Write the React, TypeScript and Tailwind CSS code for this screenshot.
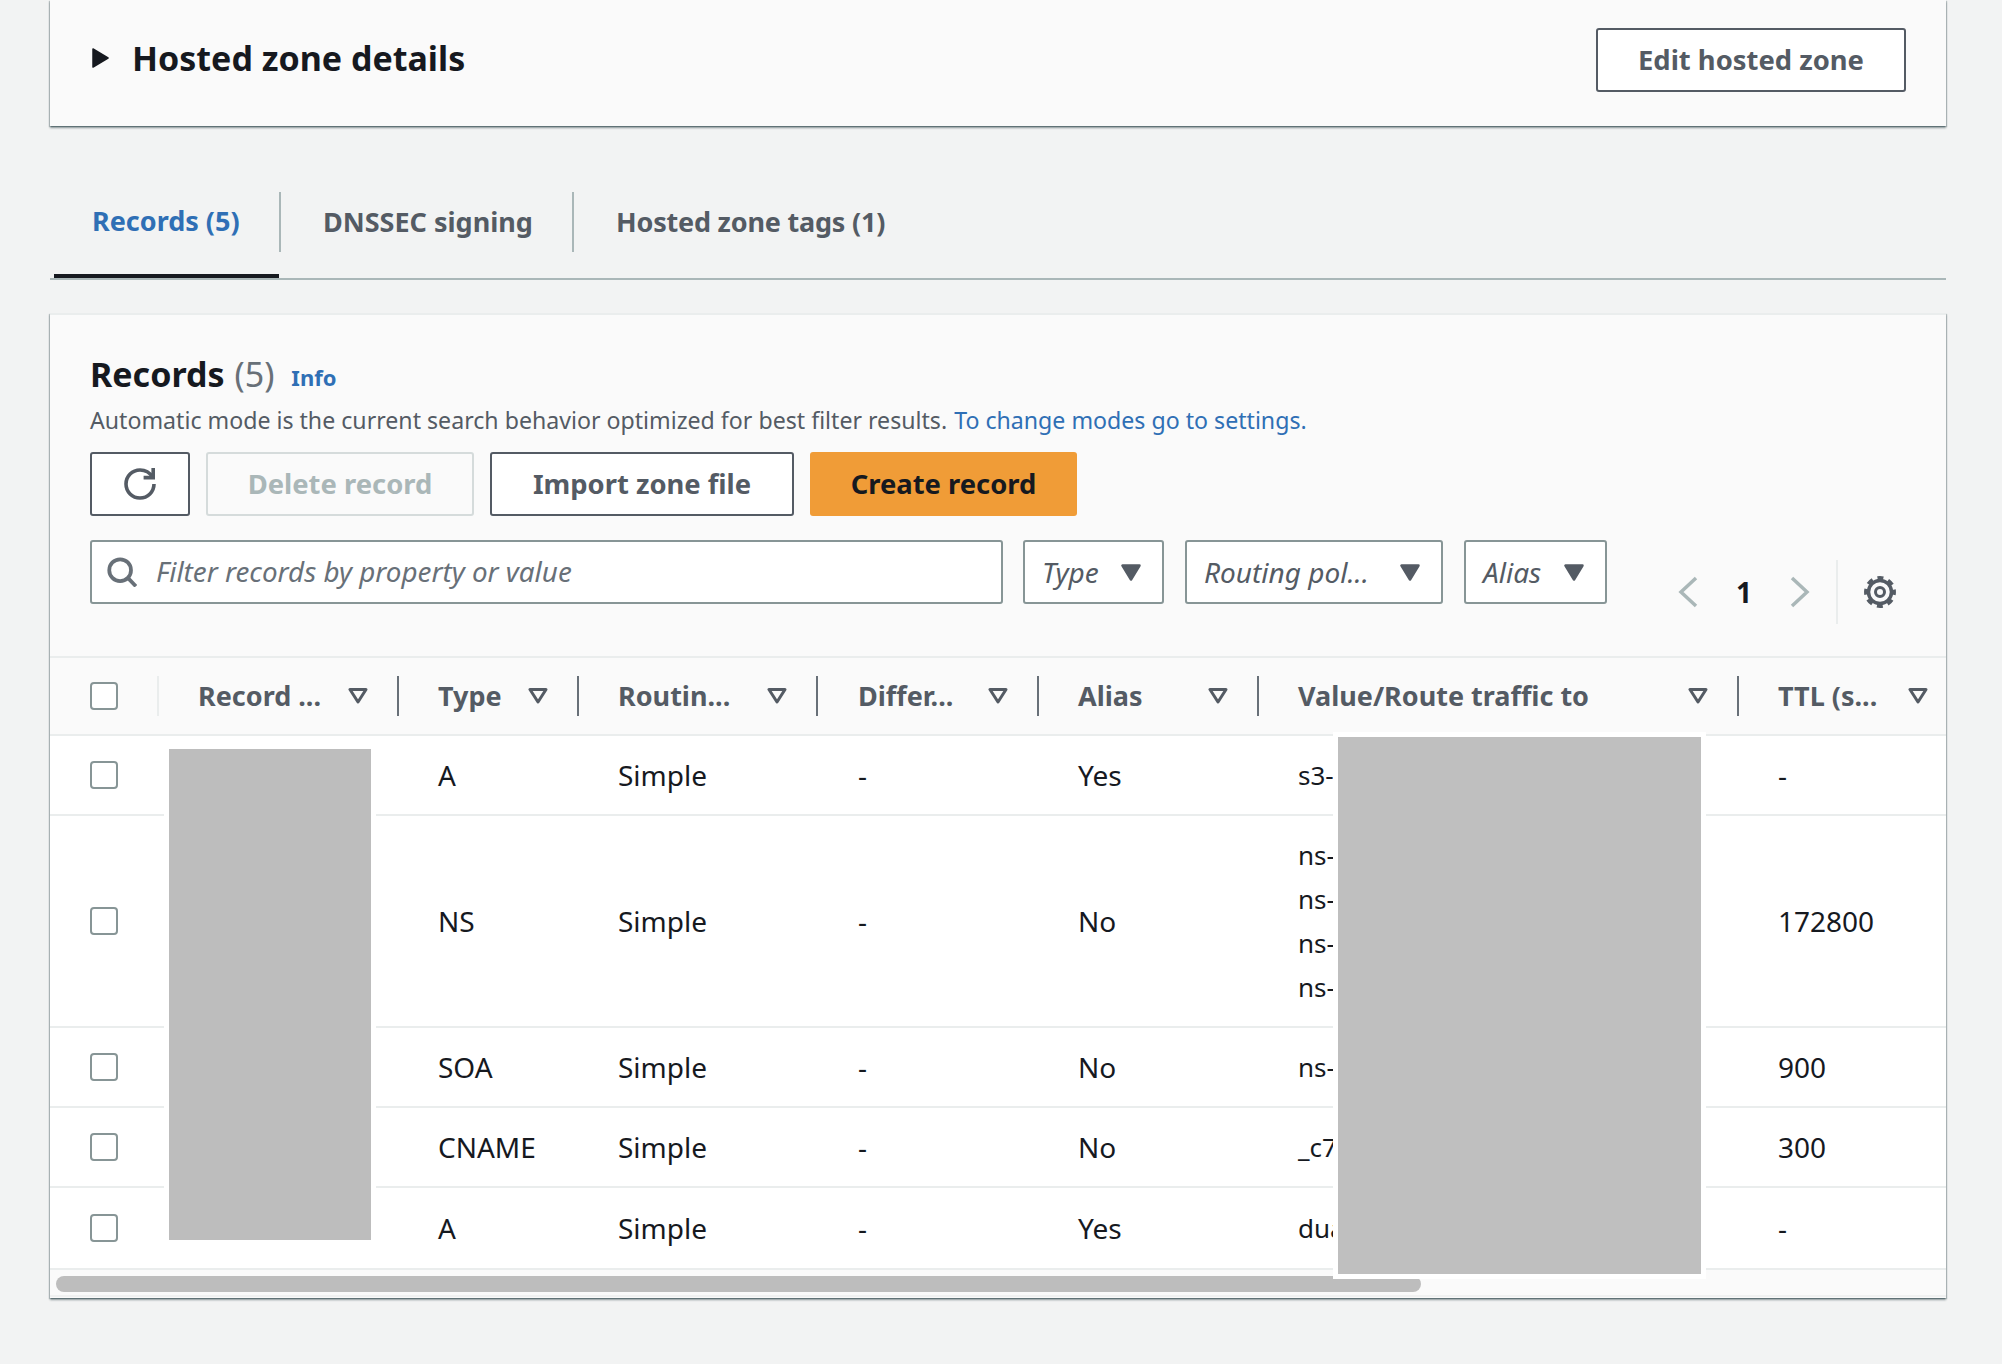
import React from 'react';

const FONT = '"Noto Sans", "Open Sans", sans-serif';

// --- TABLE DATA ---
const COLUMNS = [
    { label: 'Record ...', pad: 'pl-[39px]' },
    { label: 'Type', pad: 'pl-[39px]' },
    { label: 'Routin...', pad: 'pl-[39px]' },
    { label: 'Differ...', pad: 'pl-[40px]' },
    { label: 'Alias', pad: 'pl-[39px]' },
    { label: 'Value/Route traffic to', pad: 'pl-[39px]' },
];

const ROWS = [
    { type: 'A', alias: 'Yes', value: ['s3-'], ttl: '-', height: 'h-[80px]' },
    { type: 'NS', alias: 'No', value: ['ns-', 'ns-', 'ns-', 'ns-'], ttl: '172800', height: 'h-[212px]' },
    { type: 'SOA', alias: 'No', value: ['ns-'], ttl: '900', height: 'h-[80px]' },
    { type: 'CNAME', alias: 'No', value: ['_c7'], ttl: '300', height: 'h-[80px]' },
    { type: 'A', alias: 'Yes', value: ['dua'], ttl: '-', height: 'h-[82px]' },
];

const GRID = 'grid grid-cols-[109px_240px_180px_239px_221px_220px_480px_207px]';

// --- ICONS ---
const FilterIcon = () => (
    <svg width="20" height="16" viewBox="0 0 20 16" className="shrink-0">
        <path d="M2 1.5h16L10 14z" fill="none" stroke="#545b64" strokeWidth="3" strokeLinejoin="round" />
    </svg>
);

const CaretDown = () => (
    <svg width="20" height="17" viewBox="0 0 20 17" className="shrink-0">
        <path d="M1.5 1.5h17L10 15.5z" fill="#545b64" stroke="#545b64" strokeWidth="2.5" strokeLinejoin="round" />
    </svg>
);

const RefreshIcon = () => (
    <svg width="32" height="32" viewBox="0 0 16 16" fill="none" stroke="#545b64" strokeWidth="1.8">
        <path d="M15 8a7 7 0 1 1-7-7c2.6 0 4.9 1.3 6.3 3.6" />
        <path d="M14.6 0v4.8H9.8" />
    </svg>
);

const SearchIcon = () => (
    <svg width="30" height="30" viewBox="0 0 16 16" fill="none" stroke="#687078" strokeWidth="2" className="shrink-0">
        <circle cx="7" cy="7" r="5.8" />
        <path d="M11 11l4.4 4.6" />
    </svg>
);

const GearIcon = () => (
    <svg width="32" height="32" viewBox="0 0 32 32" fill="none" stroke="#545b64" className="shrink-0">
        <circle cx="16" cy="16" r="11.5" strokeWidth="3.5" />
        <circle cx="16" cy="16" r="14.2" strokeWidth="3.5" strokeDasharray="6 5.15" strokeDashoffset="3" />
        <circle cx="16" cy="16" r="4.5" strokeWidth="3" />
    </svg>
);

const Checkbox = () => (
    <span className="block w-[28px] h-[28px] rounded-[4px] border-2 border-[#879596] bg-white" />
);

const Select = ({ label, width }: { label: string; width: string }) => (
    <div className={`${width} h-[64px] flex items-center justify-between pl-[17px] pr-[21px] bg-white border-2 border-[#879596] rounded-[3px]`}>
        <span className="text-[28px] italic text-[#545b64]">{label}</span>
        <CaretDown />
    </div>
);

const Btn = ({ children, className }: { children: React.ReactNode; className: string }) => (
    <button className={`h-[64px] flex items-center justify-center rounded-[3px] text-[27.4px] font-bold ${className}`}>
        {children}
    </button>
);

export default function App() {
    return (
        <div className="w-full h-[1364px] overflow-hidden bg-[#f2f3f3] pl-[50px] pr-[56px]" style={{ fontFamily: FONT }}>
            {/* Hosted zone details */}
            <div className="h-[126px] pl-[42px] pr-[40px] pb-[6px] flex items-center justify-between bg-[#fafafa] shadow-[0_2px_2px_0_rgba(0,28,36,0.4),1px_1px_1px_0_rgba(0,28,36,0.2),-1px_1px_1px_0_rgba(0,28,36,0.2)]">
                <div className="flex items-center mb-[4px]">
                    <svg width="17" height="20" viewBox="0 0 17 20" className="shrink-0">
                        <path d="M1 1l15 9-15 9z" fill="#16191f" stroke="#16191f" strokeWidth="1.5" strokeLinejoin="round" />
                    </svg>
                    <h1 className="ml-[23px] text-[34px] font-bold text-[#16191f]">Hosted zone details</h1>
                </div>
                <Btn className="w-[310px] bg-white border-2 border-[#545b64] text-[#545b64]">Edit hosted zone</Btn>
            </div>

            {/* Tabs */}
            <div className="mt-[64px] h-[90px] pl-[4px] flex items-start border-b-2 border-[#aab7b8] text-[27px] font-bold">
                <div className="w-[225px] h-[88px] pl-[38px] pb-[22px] flex items-center border-b-4 border-[#16191f] text-[#2f6fb5]">Records (5)</div>
                <span className="w-[2px] h-[60px] mt-[2px] bg-[#aab7b8]" />
                <div className="w-[291px] h-[64px] pl-[42px] flex items-center text-[#545b64]">DNSSEC signing</div>
                <span className="w-[2px] h-[60px] mt-[2px] bg-[#aab7b8]" />
                <div className="h-[64px] pl-[42px] flex items-center tracking-[-0.2px] text-[#545b64]">Hosted zone tags (1)</div>
            </div>

            {/* Records card */}
            <div className="mt-[33px] h-[985px] bg-[#fafafa] border-t-2 border-[#eaeded] shadow-[0_2px_2px_0_rgba(0,28,36,0.4),1px_1px_1px_0_rgba(0,28,36,0.2),-1px_1px_1px_0_rgba(0,28,36,0.2)]">
                <div className="px-[40px] pt-[34px]">
                    <div className="h-[50px] flex items-center">
                        <h2 className="text-[34px] font-bold text-[#16191f]">Records</h2>
                        <span className="ml-[10px] text-[34px] text-[#687078]">(5)</span>
                        <a className="ml-[17px] mt-[6px] text-[22px] font-bold text-[#2f6fb5]">Info</a>
                    </div>
                    <p className="mt-[1px] h-[40px] flex items-center text-[23.15px] text-[#545b64]">
                        Automatic mode is the current search behavior optimized for best filter results.
                        <a className="ml-[7px] text-[#2f6fb5]">To change modes go to settings.</a>
                    </p>
                    <div className="mt-[12px] flex gap-[16px]">
                        <Btn className="w-[100px] bg-white border-2 border-[#545b64]"><RefreshIcon /></Btn>
                        <Btn className="w-[268px] bg-[#fafafa] border-2 border-[#d5dbdb] text-[#aab7b8]">Delete record</Btn>
                        <Btn className="w-[304px] bg-white border-2 border-[#545b64] text-[#545b64]">Import zone file</Btn>
                        <Btn className="w-[267px] bg-[#f09c37] text-[#16191f]">Create record</Btn>
                    </div>
                    <div className="mt-[24px] flex items-start">
                        <div className="w-[913px] h-[64px] flex items-center pl-[15px] bg-white border-2 border-[#879596] rounded-[3px]">
                            <SearchIcon />
                            <span className="ml-[19px] text-[27.8px] italic text-[#687078]">Filter records by property or value</span>
                        </div>
                        <div className="ml-[20px] flex gap-[21px]">
                            <Select label="Type" width="w-[141px]" />
                            <Select label="Routing pol..." width="w-[258px]" />
                            <Select label="Alias" width="w-[143px]" />
                        </div>
                        <div className="ml-[71px] mt-[20px] h-[64px] flex items-center">
                            <svg width="20" height="32" viewBox="0 0 20 32" fill="none" stroke="#aab7b8" strokeWidth="3.5">
                                <path d="M18 2L3 16l15 14" />
                            </svg>
                            <span className="ml-[38px] w-[14px] text-center text-[28px] font-bold text-[#16191f]">1</span>
                            <svg width="20" height="32" viewBox="0 0 20 32" fill="none" stroke="#aab7b8" strokeWidth="3.5" className="ml-[40px]">
                                <path d="M2 2l15 14L2 30" />
                            </svg>
                            <span className="ml-[26px] w-[2px] h-[64px] bg-[#eaeded]" />
                            <span className="ml-[26px]"><GearIcon /></span>
                        </div>
                    </div>
                </div>

                {/* Table */}
                <div className="relative mt-[32px] text-[28px]">
                    <div className={`${GRID} h-[80px] border-y-2 border-[#eaeded] text-[27px] font-bold text-[#545b64]`}>
                        <div className="flex items-center pl-[40px]">
                            <Checkbox />
                            <span className="ml-auto w-[2px] h-[40px] bg-[#eaeded]" />
                        </div>
                        {COLUMNS.map((col) => (
                            <div key={col.label} className={`flex items-center ${col.pad}`}>
                                <span className="whitespace-nowrap">{col.label}</span>
                                <span className="ml-auto mr-[29px]"><FilterIcon /></span>
                                <span className="w-[2px] h-[40px] bg-[#687078]" />
                            </div>
                        ))}
                        <div className="flex items-center pl-[39px]">
                            <span className="whitespace-nowrap">TTL (s...</span>
                            <span className="ml-auto mr-[18px]"><FilterIcon /></span>
                        </div>
                    </div>

                    <div className="bg-white text-[#16191f]">
                        {ROWS.map((row, idx) => (
                            <div key={idx} className={`${GRID} ${row.height} items-center border-b-2 border-[#eaeded]`}>
                                <div className="pl-[40px]"><Checkbox /></div>
                                <div />
                                <div className="pl-[39px]">{row.type}</div>
                                <div className="pl-[39px]">Simple</div>
                                <div className="pl-[40px]">-</div>
                                <div className="pl-[39px]">{row.alias}</div>
                                <div className="pl-[39px] text-[26px]">
                                    {row.value.map((line, i) => (
                                        <div key={i} className="h-[44px] leading-[44px]">{line}</div>
                                    ))}
                                </div>
                                <div className="pl-[39px]">{row.ttl}</div>
                            </div>
                        ))}
                    </div>

                    {/* Scrollbar */}
                    <div className="h-[27px] pt-[6px] pl-[6px] border-b-2 border-[#f0f1f1]">
                        <div className="w-[1365px] h-[16px] rounded-[8px] bg-[#bdbdbd]" />
                    </div>

                    {/* Redacted blocks lying over the table */}
                    <div className="absolute left-[114px] top-[88px] w-[212px] h-[501px] bg-[#bdbdbd] border-[5px] border-white" />
                    <div className="absolute left-[1283px] top-[76px] w-[373px] h-[547px] bg-[#bfbfbf] border-[5px] border-white" />
                </div>
            </div>
        </div>
    );
}
